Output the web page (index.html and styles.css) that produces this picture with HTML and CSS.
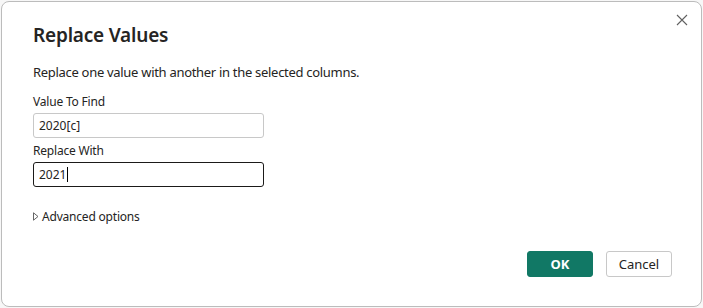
FILE: index.html
```html
<!DOCTYPE html>
<html lang="en">
<head>
  <meta charset="UTF-8" />
  <title>Replace Values</title>
  <link rel="stylesheet" href="styles.css">
</head>
<body>
  <div class="dialog">
    <button class="close" aria-label="Close">
      <svg width="12" height="12" viewBox="0 0 12 12">
        <path d="M1 1 L11 11 M11 1 L1 11" stroke="#616161" stroke-width="1.1" fill="none"/>
      </svg>
    </button>
    <h1 class="title">Replace Values</h1>
    <p class="desc">Replace one value with another in the selected columns.</p>

    <div class="field">
      <label>Value To Find</label>
      <input type="text" class="input" value="2020[c]" />
    </div>
    <div class="field">
      <label>Replace With</label>
      <div class="input active">2021<span class="caret"></span></div>
    </div>

    <div class="advanced">
      <svg width="6" height="9" viewBox="0 0 6 9">
        <path d="M0.5 0.8 L5 4.5 L0.5 8.2 Z" stroke="#555" stroke-width="0.9" fill="none"/>
      </svg>
      <span>Advanced options</span>
    </div>

    <div class="actions">
      <button class="btn ok">OK</button>
      <button class="btn cancel">Cancel</button>
    </div>
  </div>
</body>
</html>
```

FILE: styles.css
```css
body {
  margin: 0;
  background: #f7f7f7;
  font-family: "Noto Sans", "Open Sans", sans-serif;
  color: #252423;
}

.dialog {
  position: relative;
  box-sizing: border-box;
  width: 701px;
  height: 306px;
  margin: 1px 0 0 1px;
  padding: 20px 31px 0 31px;
  background: #fff;
  border: 1px solid #bcbcbc;
  border-radius: 8px;
}

.close {
  position: absolute;
  top: 8px;
  right: 9px;
  width: 20px;
  height: 20px;
  padding: 4px;
  border: none;
  background: none;
  cursor: pointer;
}

.title {
  margin: 0;
  font-size: 19px;
  font-weight: 600;
  line-height: 26px;
  letter-spacing: -0.2px;
  color: #252423;
}

.desc {
  margin: 15px 0 13px;
  font-size: 13px;
  line-height: 18px;
  letter-spacing: -0.3px;
}

.field label {
  display: block;
  font-size: 12px;
  line-height: 16px;
  margin-bottom: 3px;
  letter-spacing: -0.2px;
}

.input {
  display: flex;
  align-items: center;
  box-sizing: border-box;
  width: 231px;
  height: 25px;
  padding: 0 5px;
  border: 1px solid #c8c8c8;
  border-radius: 3px;
  font-family: inherit;
  font-size: 12px;
  color: #252423;
  margin-bottom: 5px;
}

.input.active {
  border-color: #1b1a19;
}

.caret {
  display: inline-block;
  width: 1px;
  height: 15px;
  margin-left: 1px;
  background: #000;
}

.advanced {
  display: flex;
  align-items: center;
  gap: 3px;
  margin-top: 21px;
  font-size: 12px;
  letter-spacing: -0.2px;
}

.actions {
  display: flex;
  justify-content: flex-end;
  gap: 13px;
  margin-top: 26px;
  margin-right: -2px;
}

.btn {
  box-sizing: border-box;
  height: 26px;
  font-family: inherit;
  font-size: 13px;
  border-radius: 3px;
  cursor: pointer;
}

.ok {
  width: 66px;
  background: #117865;
  border: 1px solid #117865;
  color: #fff;
  font-weight: 700;
}

.cancel {
  width: 66px;
  background: #fff;
  border: 1px solid #c8c8c8;
  color: #252423;
}
```
